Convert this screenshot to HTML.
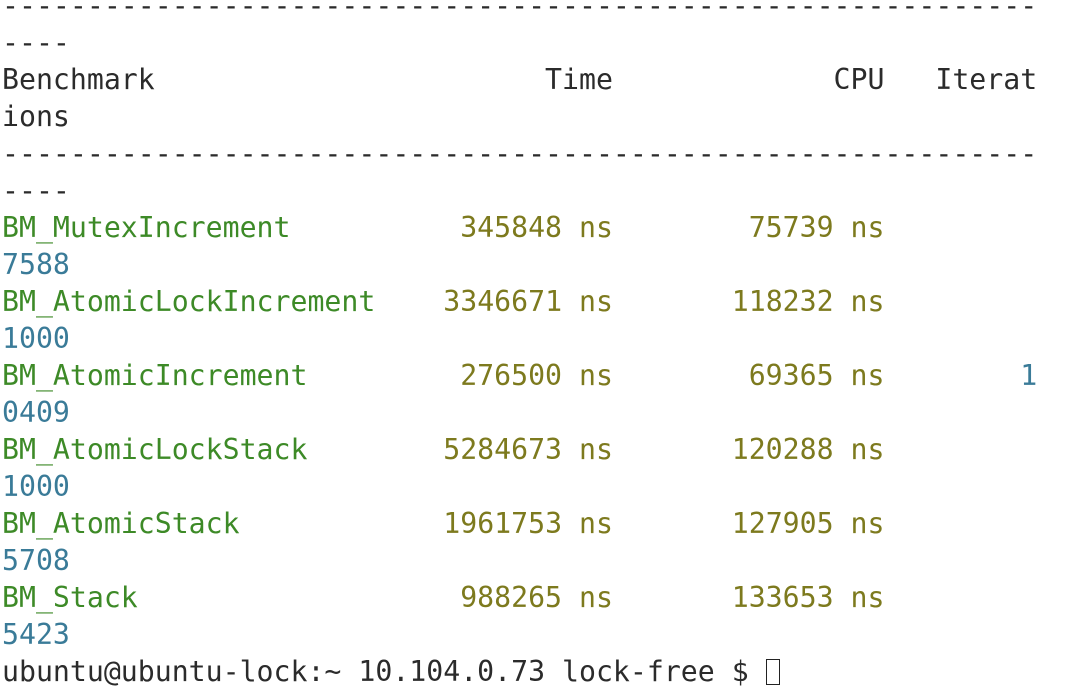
<!DOCTYPE html>
<html><head><meta charset="utf-8"><style>
html,body{margin:0;padding:0;background:#fff;width:1066px;height:662px;overflow:hidden}
pre{margin:0;position:absolute;left:2px;top:-13px;font-family:"DejaVu Sans Mono","Liberation Mono",monospace;font-size:28.2px;line-height:37px;color:#2b2b2b;white-space:pre}
.g{color:#3d8a27}.o{color:#7d7a1e}.b{color:#3a7b98}
.cur{display:inline-block;width:14px;height:26px;border:1.5px solid #222;vertical-align:-4px;box-sizing:border-box}
</style></head><body><pre>-------------------------------------------------------------
----
Benchmark                       Time             CPU   Iterat
ions
-------------------------------------------------------------
----
<span class="g">BM_MutexIncrement</span>          <span class="o">345848 ns</span>        <span class="o">75739 ns</span>
<span class="b">7588</span>
<span class="g">BM_AtomicLockIncrement</span>    <span class="o">3346671 ns</span>       <span class="o">118232 ns</span>
<span class="b">1000</span>
<span class="g">BM_AtomicIncrement</span>         <span class="o">276500 ns</span>        <span class="o">69365 ns</span>        <span class="b">1</span>
<span class="b">0409</span>
<span class="g">BM_AtomicLockStack</span>        <span class="o">5284673 ns</span>       <span class="o">120288 ns</span>
<span class="b">1000</span>
<span class="g">BM_AtomicStack</span>            <span class="o">1961753 ns</span>       <span class="o">127905 ns</span>
<span class="b">5708</span>
<span class="g">BM_Stack</span>                   <span class="o">988265 ns</span>       <span class="o">133653 ns</span>
<span class="b">5423</span>
ubuntu@ubuntu-lock:~ 10.104.0.73 lock-free $ <span class="cur"></span></pre></body></html>
